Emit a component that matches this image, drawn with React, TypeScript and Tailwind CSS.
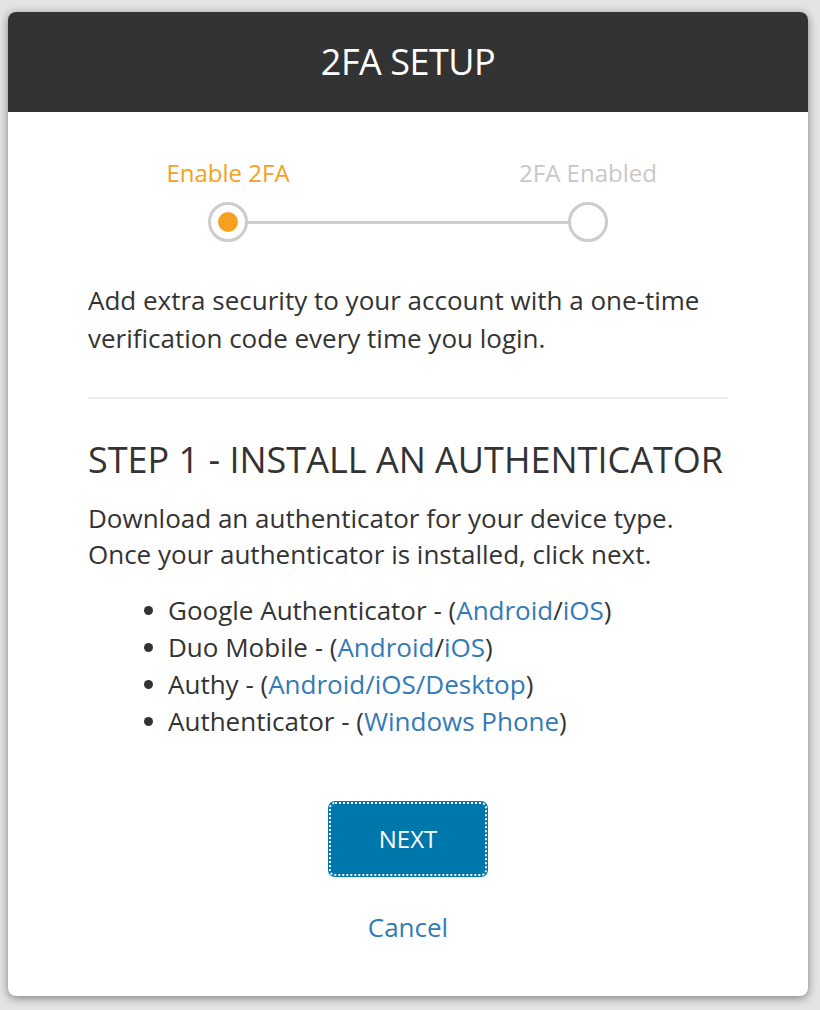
import React from 'react';

const apps = [
  { name: 'Google Authenticator', links: ['Android', 'iOS'] },
  { name: 'Duo Mobile', links: ['Android', 'iOS'] },
  { name: 'Authy', links: ['Android/iOS/Desktop'] },
  { name: 'Authenticator', links: ['Windows Phone'] },
];

function Stepper() {
  return (
    <div className="flex flex-col items-center">
      {/* Labels */}
      <div className="flex justify-center gap-[160px] text-[24px] leading-[30px]">
        <div className="w-[200px] text-center text-[#f7a01e]">Enable 2FA</div>
        <div className="w-[200px] text-center text-[#c8c8c8]">2FA Enabled</div>
      </div>
      {/* Circles + line */}
      <div className="mt-[14px] flex items-center">
        <div className="w-[40px] h-[40px] rounded-full border-[3px] border-[#cccccc] flex items-center justify-center">
          <div className="w-[20px] h-[20px] rounded-full bg-[#f7a01e]" />
        </div>
        <div className="w-[320px] h-[3px] bg-[#cccccc]" />
        <div className="w-[40px] h-[40px] rounded-full border-[3px] border-[#cccccc]" />
      </div>
    </div>
  );
}

export default function App() {
  return (
    <div
      className="w-[820px] h-[1010px] bg-[#e4e4e4] pt-[12px] pl-[8px]"
      style={{ fontFamily: '"Open Sans", "Liberation Sans", sans-serif' }}
    >
      <div className="w-[800px] h-[984px] bg-white rounded-[8px] overflow-hidden shadow-[0_2px_10px_rgba(0,0,0,0.45)]">
        {/* Header */}
        <div className="h-[100px] bg-[#333333] flex items-center justify-center">
          <h1 className="text-white text-[36px] tracking-[-0.5px]">2FA SETUP</h1>
        </div>

        {/* Body */}
        <div className="px-[80px] pt-[46px] text-[#333333]">
          <Stepper />

          <p className="mt-[39px] text-[26px] leading-[38px]">
            Add extra security to your account with a one-time verification code every time you login.
          </p>

          <hr className="mt-[40px] border-0 h-[2px] bg-[#eeeeee]" />

          <h2 className="mt-[39px] text-[36px] leading-[44px]">STEP 1 - INSTALL AN AUTHENTICATOR</h2>

          <p className="mt-[18px] text-[26px] leading-[36px]">
            Download an authenticator for your device type.
            <br />
            Once your authenticator is installed, click next.
          </p>

          <ul className="mt-[20px] pl-[56px] text-[26px] leading-[37px]">
            {apps.map((app) => (
              <li key={app.name} className="flex items-center">
                <span className="w-[9px] h-[9px] rounded-full bg-[#333333] mr-[15px]" />
                <span>
                  {app.name} - (
                  {app.links.map((l, i) => (
                    <React.Fragment key={l}>
                      {i > 0 && '/'}
                      <a href="#" className="text-[#337ab7]">{l}</a>
                    </React.Fragment>
                  ))}
                  )
                </span>
              </li>
            ))}
          </ul>

          <div className="mt-[61px] flex justify-center">
            <button className="w-[160px] h-[76px] rounded-[7px] bg-[#0077aa] text-white text-[24px] outline-2 outline-dotted outline-white -outline-offset-[3px]">
              NEXT
            </button>
          </div>

          <div className="mt-[35px] text-center text-[26px] leading-[30px]">
            <a href="#" className="text-[#337ab7]">Cancel</a>
          </div>
        </div>
      </div>
    </div>
  );
}
